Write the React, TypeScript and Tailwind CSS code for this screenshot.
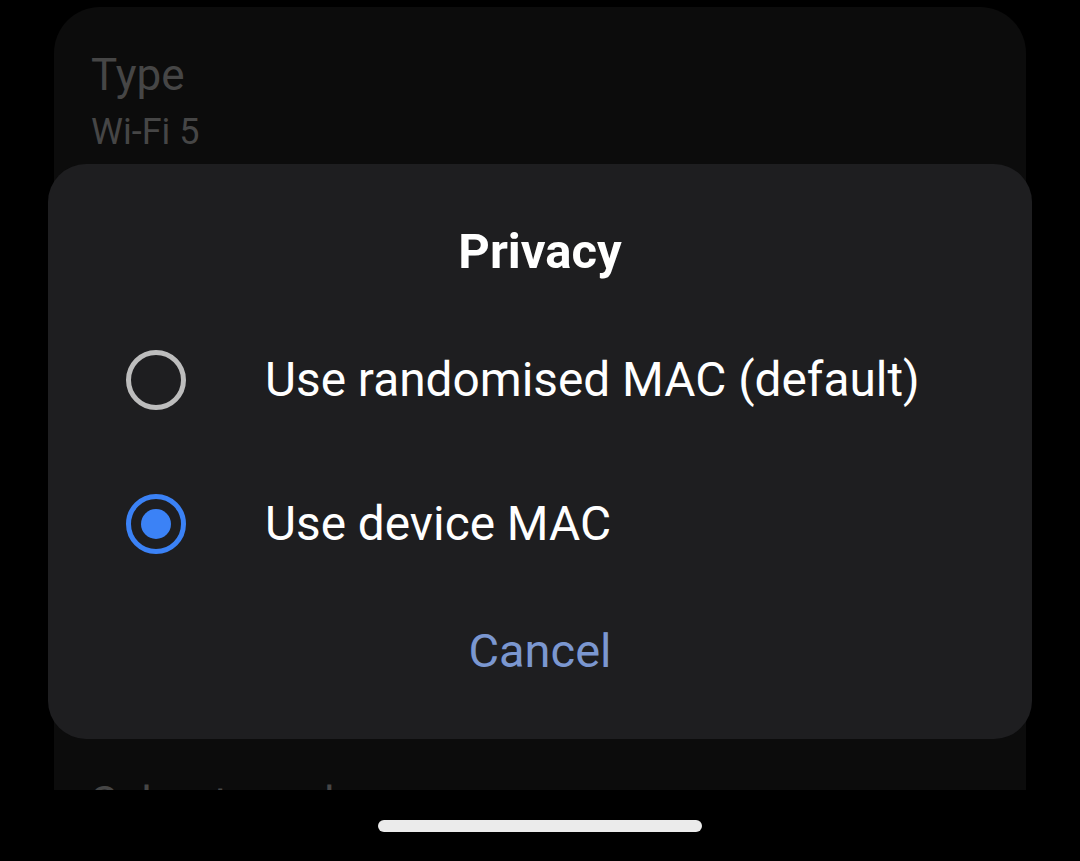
import React from 'react';

const options = [
  { id: 'random', label: 'Use randomised MAC (default)' },
  { id: 'device', label: 'Use device MAC' },
];

function Radio({ checked }: { checked: boolean }) {
  return (
    <div
      className={`w-[60px] h-[60px] shrink-0 rounded-full border-[5px] flex items-center justify-center ${
        checked ? 'border-[#3b82f6]' : 'border-[#bdbdbd]'
      }`}
    >
      {checked && <div className="w-[30px] h-[30px] rounded-full bg-[#3b82f6]" />}
    </div>
  );
}

export default function App() {
  const selected = 'device';

  return (
    <div
      className="relative w-[1080px] h-[861px] bg-black overflow-hidden"
      style={{ fontFamily: 'Roboto, "Noto Sans", sans-serif' }}
    >
      {/* Settings page behind the dialog */}
      <div className="pt-[7px] px-[54px] h-[790px] overflow-hidden">
        <div className="h-[900px] rounded-[46px] bg-[#0c0c0c] pl-[37px] pt-[40px]">
          <div className="text-[44px] leading-[56px] text-[#464646]">Type</div>
          <div className="mt-[7px] text-[36px] leading-[44px] text-[#464646]">Wi-Fi 5</div>
          <div className="mt-[621px] text-[44px] leading-[56px] text-[#464646]">Subnet mask</div>
        </div>
      </div>

      {/* Home indicator */}
      <div className="flex justify-center pt-[30px]">
        <div className="w-[324px] h-[12px] rounded-full bg-[#ebebeb]" />
      </div>

      {/* Privacy dialog */}
      <div className="absolute left-[48px] top-[164px] w-[984px] h-[575px] rounded-[38px] bg-[#1e1e20] flex flex-col">
        <h2 className="pt-[59px] text-center text-[49px] leading-[58px] font-bold text-white">Privacy</h2>
        <div className="mt-[69px] flex flex-col gap-[84px] pl-[78px]">
          {options.map((opt) => (
            <div key={opt.id} className="flex items-center gap-[79px] h-[60px]">
              <Radio checked={opt.id === selected} />
              <span className="text-[47.8px] leading-[60px] text-white">{opt.label}</span>
            </div>
          ))}
        </div>
        <div className="mt-[67px] text-center text-[47px] leading-[60px] text-[#7b97d0]">Cancel</div>
      </div>
    </div>
  );
}
